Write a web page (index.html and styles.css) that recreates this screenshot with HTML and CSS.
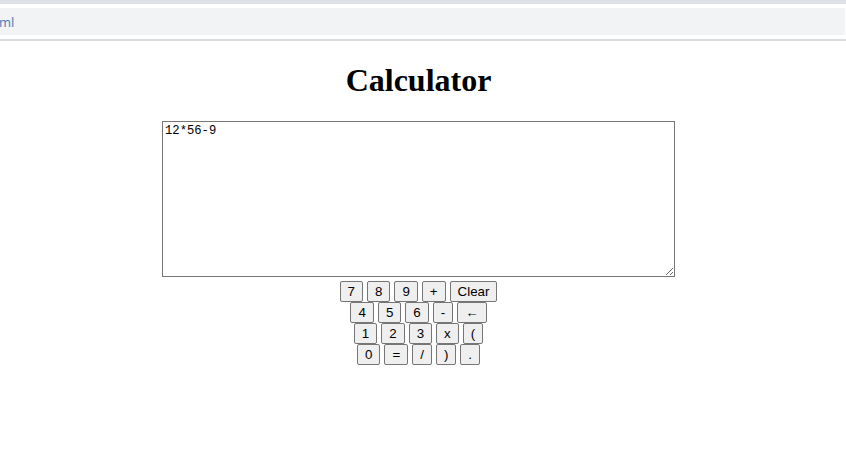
FILE: index.html
```html
<!DOCTYPE html>
<html>
<head>
<meta charset="utf-8">
<title>Calculator</title>
<link rel="stylesheet" href="styles.css">
</head>
<body>
<div class="chrome">
  <div class="strip"></div>
  <div class="gap"></div>
  <div class="bar"><span class="url">ml</span></div>
  <div class="gap2"></div>
  <div class="line"></div>
</div>
<main class="page">
  <h1 class="title">Calculator</h1>
  <textarea class="display">12*56-9</textarea>
  <div class="keypad">
    <div class="row">
      <button class="key">7</button><button class="key">8</button><button class="key">9</button><button class="key">+</button><button class="key">Clear</button>
    </div>
    <div class="row">
      <button class="key">4</button><button class="key">5</button><button class="key">6</button><button class="key">-</button><button class="key arrow">&larr;</button>
    </div>
    <div class="row">
      <button class="key">1</button><button class="key">2</button><button class="key">3</button><button class="key">x</button><button class="key">(</button>
    </div>
    <div class="row">
      <button class="key">0</button><button class="key">=</button><button class="key">/</button><button class="key">)</button><button class="key">.</button>
    </div>
  </div>
</main>
</body>
</html>
```

FILE: styles.css
```css
html, body {
  margin: 0;
  padding: 0;
  background: #ffffff;
}
body {
  font-family: "Liberation Serif", serif;
}
.chrome {
  display: flex;
  flex-direction: column;
}
.strip {
  height: 4px;
  background: #dee1e6;
}
.gap {
  height: 4px;
  background: #ffffff;
}
.bar {
  height: 27px;
  background: #f1f3f4;
  display: flex;
  align-items: center;
  margin-right: 1px;
}
.url {
  font-family: "Open Sans", "Liberation Sans", sans-serif;
  font-size: 13px;
  color: #4a7db3;
  margin-left: -1px;
}
.gap2 {
  height: 4px;
}
.line {
  height: 2px;
  background: #dadce0;
}
.page {
  margin-right: 9px;
  display: flex;
  flex-direction: column;
  align-items: center;
}
.title {
  font-family: "Liberation Serif", serif;
  font-size: 32px;
  font-weight: bold;
  margin: 21px 0 22px 0;
  line-height: 37px;
}
.display {
  width: 513px;
  height: 156px;
  box-sizing: border-box;
  border: 1px solid #767676;
  padding: 2px;
  font-family: "Liberation Mono", monospace;
  font-size: 12.2px;
  line-height: 15px;
  margin: 0;
  resize: both;
  color: #000;
}
.keypad {
  margin-top: 4px;
  display: flex;
  flex-direction: column;
}
.row {
  display: flex;
  justify-content: center;
  gap: 4px;
  height: 21px;
}
.key {
  font-family: "Liberation Sans", Arial, sans-serif;
  font-size: 13.33px;
  line-height: 15px;
  height: 21px;
  padding: 2px 7px;
  border: 1px solid #767676;
  border-radius: 2px;
  background: #efefef;
  color: #000;
  margin: 0;
  box-sizing: border-box;
}
.arrow {
  padding: 2px 7px;
}
```
